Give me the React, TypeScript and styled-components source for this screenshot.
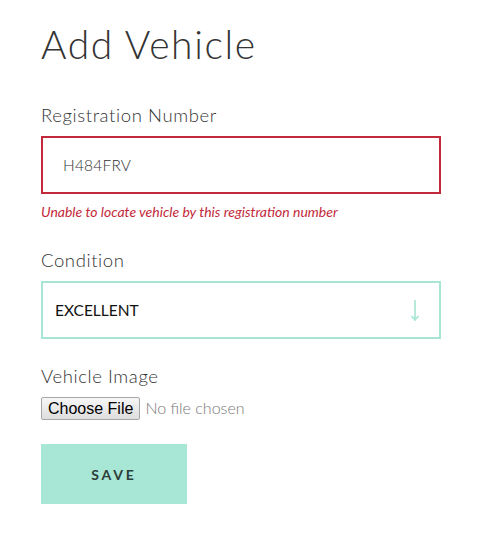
import React from "react";
import styled, { createGlobalStyle } from "styled-components";

const GlobalStyle = createGlobalStyle`
  body {
    margin: 0;
    background: #ffffff;
    font-family: Lato, "Open Sans", sans-serif;
    color: #333;
  }
`;

const Page = styled.form`
  width: 400px;
  padding: 21px 0 0 41px;
  display: flex;
  flex-direction: column;
`;

const Title = styled.h1`
  margin: 0 0 36px;
  font-size: 39px;
  font-weight: 300;
  letter-spacing: 1.6px;
  line-height: 1.2;
  color: #333;
`;

const Field = styled.div<{ $gap: number }>`
  display: flex;
  flex-direction: column;
  margin-bottom: ${(p) => p.$gap}px;
`;

const Label = styled.label`
  font-size: 18.5px;
  font-weight: 300;
  letter-spacing: 0.6px;
  line-height: 1.2;
  color: #333;
  margin-bottom: 10px;
`;

const TextInput = styled.input<{ $error?: boolean }>`
  box-sizing: border-box;
  height: 58px;
  width: 100%;
  padding: 0 20px;
  border: 2px solid ${(p) => (p.$error ? "#c3293a" : "#a7e5d4")};
  outline: none;
  font-family: Lato, sans-serif;
  font-size: 15.5px;
  font-weight: 300;
  letter-spacing: 0.2px;
  color: #333;
  background: #fff;
`;

const ErrorText = styled.div`
  margin-top: 10px;
  font-size: 14px;
  font-style: italic;
  color: #c3293a;
  line-height: 1.2;
`;

const SelectBox = styled.div`
  box-sizing: border-box;
  height: 58px;
  border: 2px solid #a7e5d4;
  display: flex;
  align-items: center;
  padding: 0 19px 0 12px;
`;

const Select = styled.select`
  appearance: none;
  border: none;
  outline: none;
  background: transparent;
  flex: 1;
  font-family: Lato, sans-serif;
  font-size: 15.5px;
  color: #111;
  padding: 0;
`;

const Arrow = styled.svg`
  width: 10px;
  height: 24px;
  margin-top: 2px;
  pointer-events: none;
`;

const FileInput = styled.input`
  font-family: Lato, sans-serif;
  font-size: 16px;
  font-weight: 300;
  color: #777;

  &::file-selector-button {
    font-family: "Liberation Sans", Arial, sans-serif;
    font-size: 16px;
    color: #000;
    padding: 1px 6px;
    margin-right: 5px;
    height: 23px;
    border: 1px solid #a6a6a6;
    border-radius: 2px;
    background: linear-gradient(#f6f6f6, #dedede);
  }
`;

const SaveButton = styled.button`
  width: 146px;
  height: 60px;
  border: none;
  background: #a8e6d5;
  font-family: Lato, sans-serif;
  font-size: 14px;
  font-weight: 700;
  letter-spacing: 2.8px;
  color: #2d3d3a;
  cursor: pointer;
`;

const App: React.FC = () => {
  return (
    <>
      <GlobalStyle />
      <Page onSubmit={(e) => e.preventDefault()}>
        <Title>Add Vehicle</Title>
        <Field $gap={28}>
          <Label htmlFor="reg">Registration Number</Label>
          <TextInput id="reg" $error defaultValue="H484FRV" />
          <ErrorText>Unable to locate vehicle by this registration number</ErrorText>
        </Field>
        <Field $gap={26}>
          <Label htmlFor="cond">Condition</Label>
          <SelectBox>
            <Select id="cond" defaultValue="EXCELLENT">
              <option>EXCELLENT</option>
              <option>GOOD</option>
              <option>FAIR</option>
              <option>POOR</option>
            </Select>
            <Arrow viewBox="0 0 10 24">
              <path d="M5 1v20M1.5 17l3.5 4 3.5-4" stroke="#a7e5d4" strokeWidth="1.6" fill="none" />
            </Arrow>
          </SelectBox>
        </Field>
        <Field $gap={24}>
          <Label htmlFor="img">Vehicle Image</Label>
          <FileInput id="img" type="file" />
        </Field>
        <SaveButton type="submit">SAVE</SaveButton>
      </Page>
    </>
  );
};

export default App;
